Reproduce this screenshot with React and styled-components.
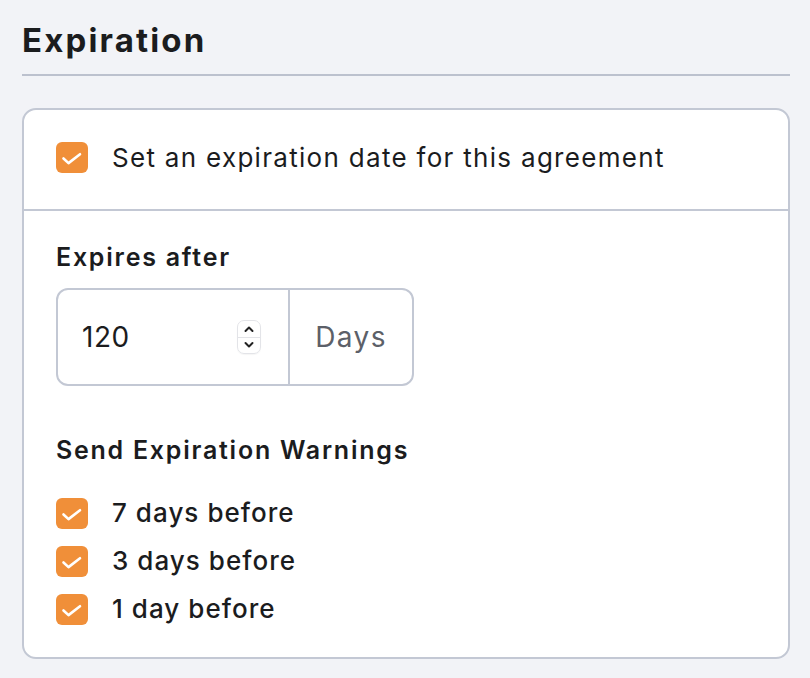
import React, { useState } from "react";
import styled, { createGlobalStyle } from "styled-components";

const GlobalStyle = createGlobalStyle`
  html, body {
    margin: 0;
    padding: 0;
    background: #f2f3f7;
    font-family: "Inter", "Liberation Sans", sans-serif;
    color: #1b1c1e;
  }
`;

const Page = styled.div`
  padding: 18px 20px 0 22px;
  width: 768px;
`;

const Title = styled.h2`
  margin: 0;
  font-size: 33px;
  font-weight: 700;
  letter-spacing: 0.065em;
  line-height: 44px;
  padding-bottom: 12px;
  border-bottom: 2px solid #bcc1ce;
`;

const Card = styled.div`
  margin-top: 32px;
  background: #fff;
  border: 2px solid #c3c8d4;
  border-radius: 14px;
`;

const CardHeader = styled.div`
  display: flex;
  align-items: center;
  gap: 24px;
  padding: 0 32px 4px;
  height: 95px;
  border-bottom: 2px solid #c3c8d4;
  cursor: pointer;
`;

const CardBody = styled.div`
  padding: 30px 32px 24px;
`;

const Label = styled.div`
  font-size: 25px;
  font-weight: 600;
  letter-spacing: 0.07em;
  line-height: 32px;
  margin: ${(p) => p.$margin || "0"};
`;

const CheckText = styled.span`
  font-size: 26px;
  font-weight: ${(p) => (p.$medium ? 500 : 400)};
  letter-spacing: ${(p) => (p.$medium ? "0.04em" : "0.05em")};
  line-height: 32px;
`;

const CheckRow = styled.label`
  display: flex;
  align-items: center;
  gap: 24px;
  height: 48px;
  cursor: pointer;
`;

const Box = styled.span`
  flex: none;
  width: 32px;
  height: 31px;
  border-radius: 6px;
  background: ${(p) => (p.$on ? "#f08f39" : "#fff")};
  box-shadow: ${(p) => (p.$on ? "none" : "inset 0 0 0 2px #c3c8d4")};
  display: flex;
`;

const InputGroup = styled.div`
  display: flex;
  width: 354px;
  height: 94px;
  margin-top: 15px;
  border: 2px solid #c3c8d4;
  border-radius: 12px;
  overflow: hidden;
`;

const NumberField = styled.div`
  flex: 1;
  display: flex;
  align-items: center;
  justify-content: space-between;
  padding: 0 27px 0 24px;
  font-size: 28px;
  letter-spacing: 0.02em;
  border-right: 2px solid #c3c8d4;
`;

const Spinner = styled.div`
  width: 22px;
  height: 32px;
  border-radius: 7px;
  border: 1px solid #e3e4e8;
  display: flex;
  flex-direction: column;
  overflow: hidden;
  box-shadow: 0 1px 1px rgba(0, 0, 0, 0.04);

  & > span {
    flex: 1;
    display: flex;
    align-items: center;
    justify-content: center;
  }
  & > span + span {
    border-top: 1px solid #e3e4e8;
  }
`;

const Unit = styled.div`
  width: 122px;
  display: flex;
  align-items: center;
  justify-content: center;
  font-size: 28px;
  letter-spacing: 0.05em;
  color: #5c6068;
`;

const Warnings = styled.div`
  display: flex;
  flex-direction: column;
  margin-top: 23px;
`;

const Check = () => (
  <svg width="32" height="31" viewBox="0 0 32 31" fill="none">
    <path
      d="M7.5 16.5l5 4.6L24 12.2"
      stroke="#fff"
      strokeWidth="2.6"
      strokeLinecap="round"
      strokeLinejoin="round"
    />
  </svg>
);

const Chevron = ({ up }) => (
  <svg width="12" height="8" viewBox="0 0 12 8" fill="none">
    <path
      d={up ? "M2.5 6l3.5-3.5L9.5 6" : "M2.5 2l3.5 3.5L9.5 2"}
      stroke="#222"
      strokeWidth="2"
      strokeLinecap="round"
      strokeLinejoin="round"
    />
  </svg>
);

const App = () => {
  const [enabled, setEnabled] = useState(true);
  const [warnings, setWarnings] = useState([true, true, true]);
  const labels = ["7 days before", "3 days before", "1 day before"];

  const toggle = (i) =>
    setWarnings((w) => w.map((v, j) => (j === i ? !v : v)));

  return (
    <Page>
      <GlobalStyle />
      <Title>Expiration</Title>
      <Card>
        <CardHeader onClick={() => setEnabled(!enabled)}>
          <Box $on={enabled}>{enabled && <Check />}</Box>
          <CheckText>Set an expiration date for this agreement</CheckText>
        </CardHeader>
        <CardBody>
          <Label>Expires after</Label>
          <InputGroup>
            <NumberField>
              <span>120</span>
              <Spinner>
                <span>
                  <Chevron up />
                </span>
                <span>
                  <Chevron />
                </span>
              </Spinner>
            </NumberField>
            <Unit>Days</Unit>
          </InputGroup>
          <Label $margin="48px 0 0">Send Expiration Warnings</Label>
          <Warnings>
            {labels.map((l, i) => (
              <CheckRow key={l} onClick={() => toggle(i)}>
                <Box $on={warnings[i]}>{warnings[i] && <Check />}</Box>
                <CheckText $medium>{l}</CheckText>
              </CheckRow>
            ))}
          </Warnings>
        </CardBody>
      </Card>
    </Page>
  );
};

export default App;
